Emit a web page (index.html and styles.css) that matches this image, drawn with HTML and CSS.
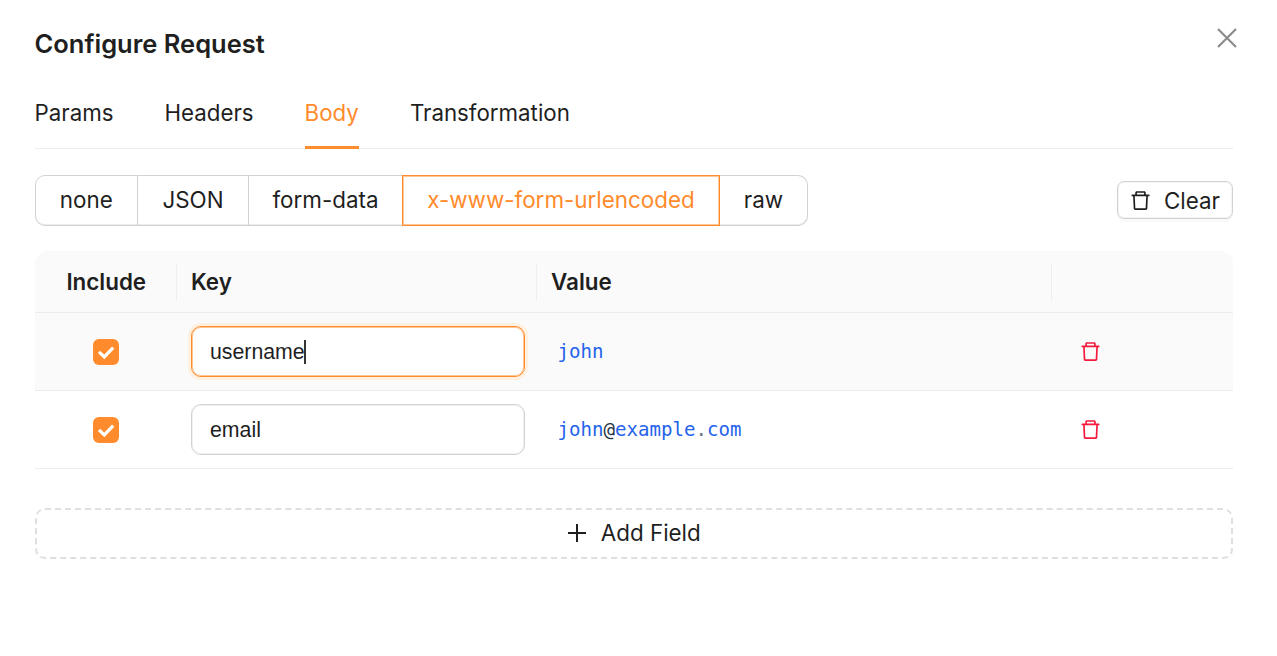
FILE: index.html
```html
<!DOCTYPE html>
<html lang="en">
<head>
<meta charset="utf-8">
<title>Configure Request</title>
<link rel="stylesheet" href="styles.css">
</head>
<body>
<svg class="defs" width="0" height="0">
  <symbol id="trash" viewBox="64 64 896 896"><path d="M360 184h-8c4.400 0 8-3.600 8-8v8h304v-8c0 4.400 3.600 8 8 8h-8v72h72v-80c0-35.300-28.700-64-64-64H352c-35.300 0-64 28.700-64 64v80h72v-72zm504 72H160c-17.700 0-32 14.300-32 32v32c0 4.400 3.600 8 8 8h60.400l24.700 523c1.600 34.100 29.800 61 63.900 61h454c34.200 0 62.300-26.800 63.900-61l24.700-523H888c4.400 0 8-3.600 8-8v-32c0-17.700-14.300-32-32-32zM731.300 840H292.700l-24.200-512h487l-24.200 512z" fill="currentColor"/></symbol>
</svg>
<main class="dialog">
  <header class="head">
    <h1 class="title">Configure Request</h1>
    <svg class="close" viewBox="0 0 22 22"><path d="M2 2L20 20M20 2L2 20" stroke="currentColor" stroke-width="2.200" fill="none"/></svg>
  </header>
  <nav class="tabs">
    <span class="tab">Params</span><span class="tab">Headers</span><span class="tab active">Body</span><span class="tab">Transformation</span>
  </nav>
  <div class="toolbar">
    <div class="types">
      <span class="type w-none">none</span><span class="type w-json">JSON</span><span class="type w-form">form-data</span><span class="type w-url selected">x-www-form-urlencoded</span><span class="type w-raw">raw</span>
    </div>
    <button class="clear"><svg class="icon"><use href="#trash"/></svg><span>Clear</span></button>
  </div>
  <section class="table">
    <div class="row thead"><div class="cell center">Include</div><div class="cell">Key</div><div class="cell">Value</div><div class="cell"></div></div>
    <div class="row focusrow">
      <div class="cell center"><span class="check"><svg viewBox="0 0 26 26"><path d="M6 12.800L11.300 17.900L20.200 8.600" stroke="#fff" stroke-width="3.200" fill="none"/></svg></span></div>
      <div class="cell"><div class="input focused">username<i class="caret"></i></div></div>
      <div class="cell code">john</div>
      <div class="cell action"><svg class="icon"><use href="#trash"/></svg></div>
    </div>
    <div class="row">
      <div class="cell center"><span class="check"><svg viewBox="0 0 26 26"><path d="M6 12.800L11.300 17.900L20.200 8.600" stroke="#fff" stroke-width="3.200" fill="none"/></svg></span></div>
      <div class="cell"><div class="input">email</div></div>
      <div class="cell code">john<span class="at">@</span>example<span class="dot">.</span>com</div>
      <div class="cell action"><svg class="icon"><use href="#trash"/></svg></div>
    </div>
  </section>
  <button class="add"><svg class="plus" viewBox="0 0 18 18"><path d="M9 0V18M0 9H18" stroke="currentColor" stroke-width="2"/></svg><span>Add Field</span></button>
</main>
</body>
</html>
```
FILE: styles.css
```css
* { box-sizing: border-box; }
body {
  margin: 0;
  background: #fff;
  color: #1f1f1f;
  font: 22.4px/35px Inter, "Liberation Sans", sans-serif;
  white-space: nowrap;
}
button { font: inherit; color: inherit; background: #fff; }
.defs { display: block; }
.dialog { padding: 24px 44px 0 34.5px; }
.head { display: flex; justify-content: space-between; height: 40px; }
.title { margin: 0; font-size: 25.5px; line-height: 40px; font-weight: 600; }
.close { width: 22px; height: 22px; margin: 3px -4.5px 0 0; color: #8c8c8c; }
.tabs {
  display: flex;
  gap: 51px;
  height: 85px;
  padding-top: 18px;
  border-bottom: 1px solid #ececec;
}
.tab { height: 67px; padding-top: 13px; font-size: 22.3px; }
.tab.active { color: #ff8b2c; border-bottom: 3px solid #ff8b2c; }
.toolbar { display: flex; align-items: center; justify-content: space-between; margin-top: 26px; height: 51px; }
.types { display: flex; height: 51px; width: 774px; }
.type {
  display: flex;
  align-items: center;
  justify-content: center;
  padding-bottom: 2px;
  border: 1px solid #d2d2d2;
  border-left: 0;
  box-shadow: inset 0 -1px 0 #ececec;
}
.w-none { width: 103.5px; border-left: 1px solid #d2d2d2; border-radius: 10px 0 0 10px; }
.w-json { width: 111px; }
.w-form { width: 153px; border-right: 0; }
.w-url { width: 318px; }
.w-raw { width: 88px; border-radius: 0 10px 10px 0; }
.selected { color: #ff8b2c; border: 1px solid #ff8b2c; box-shadow: inset 0 0 0 1px #ffc795; }
.clear {
  display: flex;
  align-items: center;
  gap: 13px;
  width: 116px;
  height: 38px;
  margin-bottom: 1px;
  padding: 0 0 0 12px;
  border: 1px solid #d2d2d2;
  border-radius: 7px;
  box-shadow: inset 0 0 0 1px #f3f3f3, 0 3px 0 rgba(0, 0, 0, .02);
}
.icon { display: block; flex: none; width: 21px; height: 21px; }
.table { margin-top: 25px; }
.row {
  display: grid;
  grid-template-columns: 142.5px 360px 515px 1fr;
  height: 78px;
  border-bottom: 1px solid #ececec;
}
.cell { display: flex; align-items: center; padding: 0 12px 0 14px; }
.center { justify-content: center; padding: 0; }
.thead { height: 62px; background: #fafafa; border-radius: 13px 13px 0 0; font-weight: 600; align-items: center; }
.thead .cell { height: 37px; background: linear-gradient(#eee, #eee) right / 1px 100% no-repeat; }
.thead .center { padding-left: 1px; }
.thead .cell:last-child { background: none; }
.focusrow { background: #fafafa; }
.check { width: 26px; height: 26px; border-radius: 6px; background: #ff8b2c; }
.check svg { display: block; }
.input {
  display: flex;
  align-items: center;
  width: 100%;
  height: 51px;
  padding: 1px 18px 0;
  background: #fff;
  border: 1px solid #d2d2d2;
  border-radius: 10px;
  box-shadow: inset 0 0 0 1px #f0f0f0;
  font: 21.3px/35px "Liberation Sans", Arial, sans-serif;
}
.focused { border-color: #ff8b2c; box-shadow: inset 0 0 0 1px #ffc795, 0 0 0 3px #fff0e0; }
.caret { width: 2px; height: 24px; margin-left: -1px; background: #333; }
.code { padding: 1px 0 0 20.5px; font: 19.1px/30px "DejaVu Sans Mono", monospace; color: #2563eb; }
.at { color: #24323f; }
.dot { color: #64748b; }
.action { padding-left: 28.4px; color: #f5193b; }
.add {
  display: flex;
  align-items: center;
  justify-content: center;
  gap: 15px;
  width: 100%;
  height: 51px;
  margin-top: 39px;
  padding: 0 0 2px 1px;
  border: 2px dashed #dfdfdf;
  border-radius: 10px;
  box-shadow: 0 3px 0 rgba(0, 0, 0, .015);
}
.plus { width: 18px; height: 18px; }
```
